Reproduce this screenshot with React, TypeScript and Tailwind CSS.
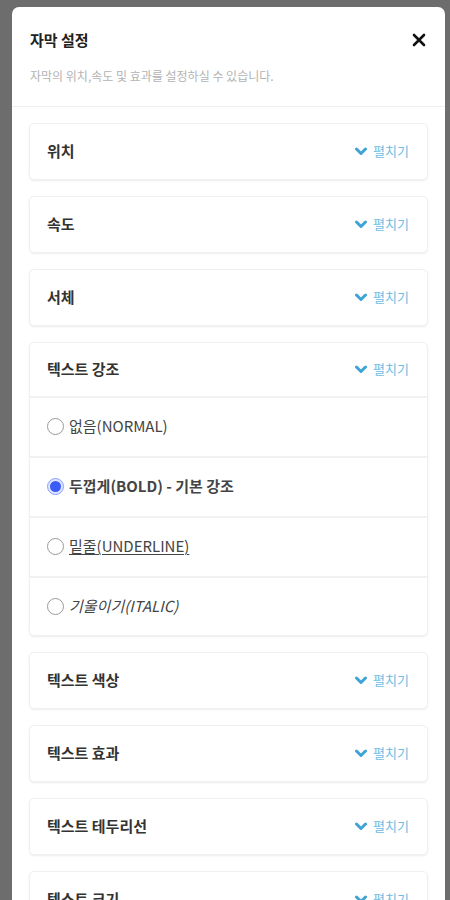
import { useState } from 'react'

const sections = ['위치', '속도', '서체']
const after = ['텍스트 색상', '텍스트 효과', '텍스트 테두리선', '텍스트 크기']

const options = [
  { id: 'normal', label: '없음(NORMAL)', cls: '' },
  { id: 'bold', label: '두껍게(BOLD) - 기본 강조', cls: 'font-bold text-[#222]' },
  { id: 'underline', label: '밑줄(UNDERLINE)', cls: 'underline underline-offset-2' },
  { id: 'italic', label: '기울이기(ITALIC)', cls: 'italic' },
]

function Toggle() {
  return (
    <span className="flex items-center gap-[6px] text-[13px] text-[#6cbde2]">
      <svg width="12" height="9" viewBox="0 0 12 9" className="mt-[1px]">
        <path d="M1.5 2 L6 6.5 L10.5 2" fill="none" stroke="#3fa3d8" strokeWidth="3" strokeLinecap="round" strokeLinejoin="round" />
      </svg>
      펼치기
    </span>
  )
}

function CardHeader({ title, h = 'h-[55px]' }: { title: string; h?: string }) {
  return (
    <div className={`flex ${h} items-center justify-between pl-[17px] pr-[18px]`}>
      <span className="text-[15px] font-bold text-[#333]">{title}</span>
      <Toggle />
    </div>
  )
}

export default function App() {
  const [selected, setSelected] = useState('bold')

  return (
    <div
      className="h-[900px] overflow-hidden bg-[#6d6d6d] pl-3 pr-[5px] pt-[7px]"
      style={{ fontFamily: '"Noto Sans CJK KR", "Noto Sans", sans-serif' }}
    >
      <div className="h-[900px] rounded-t-[7px] bg-white">
        <div className="border-b border-[#eeeeee] px-[18px] pb-[21px] pt-[22px]">
          <div className="flex items-center justify-between">
            <h2 className="text-[15px] font-bold text-[#222]">자막 설정</h2>
            <svg width="14" height="14" viewBox="0 0 14 14" className="mr-[1px]">
              <path d="M2 2 L12 12 M12 2 L2 12" stroke="#111" strokeWidth="2.6" strokeLinecap="round" />
            </svg>
          </div>
          <p className="mt-[15px] text-[12px] text-[#b3b3b3]">자막의 위치,속도 및 효과를 설정하실 수 있습니다.</p>
        </div>

        <div className="flex flex-col gap-4 px-[17px] pt-[16px]">
          {sections.map((s) => (
            <div key={s} className="rounded-[5px] border border-[#f0f0f0] shadow-[0_1px_2px_rgba(0,0,0,0.08)]">
              <CardHeader title={s} />
            </div>
          ))}

          <div className="rounded-[5px] border border-[#f0f0f0] shadow-[0_1px_2px_rgba(0,0,0,0.08)]">
            <div className="border-b-2 border-[#f1f1f1]">
              <CardHeader title="텍스트 강조" h="h-[53px]" />
            </div>
            {options.map((o, i) => (
              <label
                key={o.id}
                className={`flex cursor-pointer items-center gap-[5px] pl-[17px] ${i < options.length - 1 ? 'h-[60px] border-b-2 border-[#f1f1f1]' : 'h-[57px]'}`}
              >
                <span
                  className={`flex h-[17px] w-[17px] items-center justify-center rounded-full border ${selected === o.id ? 'border-[#8aa0ff] bg-[#dfe5ff]' : 'border-[#9a9a9a] bg-white'}`}
                >
                  {selected === o.id && <span className="h-[11px] w-[11px] rounded-full bg-[#3b5bf6]" />}
                </span>
                <input
                  type="radio"
                  name="emphasis"
                  className="hidden"
                  checked={selected === o.id}
                  onChange={() => setSelected(o.id)}
                />
                <span className={`text-[15px] text-[#444] ${o.cls}`}>{o.label}</span>
              </label>
            ))}
          </div>

          {after.map((s) => (
            <div key={s} className="rounded-[5px] border border-[#f0f0f0] shadow-[0_1px_2px_rgba(0,0,0,0.08)]">
              <CardHeader title={s} />
            </div>
          ))}
        </div>
      </div>
    </div>
  )
}
